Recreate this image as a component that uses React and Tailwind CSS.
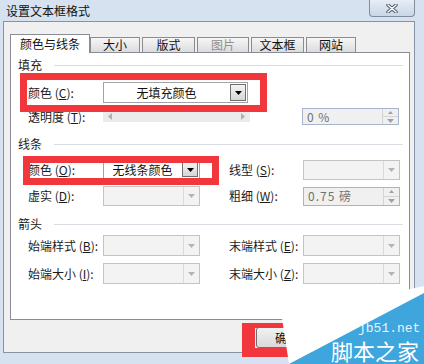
const font = { fontFamily: '"Noto Sans CJK SC", "Liberation Sans", sans-serif' };

const Key = ({ k }) => (
  <span>
    (<span className="underline">{k}</span>):
  </span>
);

const Label = ({ text, k, w = 'w-[75px]', className = '' }) => (
  <div className={`${w} shrink-0 text-[12px] leading-[14px] text-[#1b1b1b] ${className}`}>
    {text} <Key k={k} />
  </div>
);

const Header = ({ text }) => (
  <div className="flex items-center h-[14px] pl-[7px] pr-[6px]">
    <span className="text-[12px] leading-[14px] text-[#1b1b1b]">{text}</span>
    <div className="flex-1 ml-[12px] border-t border-[#d8dde3]" />
  </div>
);

const Arrow = ({ color = '#000' }) => (
  <svg width="7" height="4" viewBox="0 0 7 4">
    <path d="M0 0 L7 0 L3.5 4 Z" fill={color} />
  </svg>
);

const Combo = ({ text, w = 'w-[97px]', h = 'h-[20px]' }) => (
  <div className={`${w} ${h} flex border border-[#a3a3a3] bg-white`}>
    <div className="flex-1 flex items-center justify-center text-[12px] text-[#111]">{text}</div>
    <div className="w-[16px] m-px flex items-center justify-center border border-[#707070] bg-gradient-to-b from-[#f4f4f4] to-[#d6d6d6]">
      <Arrow />
    </div>
  </div>
);

const Disabled = ({ w = 'w-[97px]', h = 'h-[20px]' }) => (
  <div className={`${w} ${h} flex border border-[#c4c4c4] bg-[#f3f3f3]`}>
    <div className="flex-1" />
    <div className="w-[16px] flex items-center justify-center border-l border-[#dadada] bg-[#f3f3f3]">
      <Arrow color="#b4b4b4" />
    </div>
  </div>
);

const Spin = ({ text, w = 'w-[97px]', h = 'h-[19px]' }) => (
  <div className={`${w} ${h} flex border border-[#a6b5cc] bg-[#f0f0f0]`}>
    <div className="flex-1 flex items-center pl-[4px] text-[12px] text-[#707070] tracking-[1px]">{text}</div>
    <div className="w-[16px] flex flex-col border-l border-[#d4d4d4]">
      <div className="flex-1 flex items-center justify-center border-b border-[#d4d4d4]">
        <svg width="5" height="3" viewBox="0 0 5 3"><path d="M0 3 L5 3 L2.5 0 Z" fill="#a0a0a0" /></svg>
      </div>
      <div className="flex-1 flex items-center justify-center">
        <Arrow color="#a0a0a0" />
      </div>
    </div>
  </div>
);

const Tab = ({ children, w, active, disabled }) =>
  active ? (
    <div className={`${w} h-[19px] -mb-px relative z-10 flex items-center justify-center bg-white border border-b-0 border-[#898c95] text-[12px] text-[#111]`}>
      {children}
    </div>
  ) : (
    <div
      className={`${w} h-[15px] flex items-center justify-center border border-b-0 border-[#898c95] bg-gradient-to-b from-[#f6f6f6] to-[#dcdcdc] text-[12px] ${
        disabled ? 'text-[#8f8f8f]' : 'text-[#111]'
      }`}
    >
      {children}
    </div>
  );

export default function App() {
  return (
    <div className="relative w-[424px] h-[364px] overflow-hidden bg-[#d6e2ef]" style={font}>
      {/* Title bar */}
      <div className="flex justify-between items-start h-[21px] pl-[6px] pr-[9px]">
        <span className="self-center text-[12px] text-[#111]">设置文本框格式</span>
        <div className="w-[46px] h-[17px] flex items-center justify-center rounded-b-[4px] border border-t-0 border-[#7f8c9e] bg-gradient-to-b from-[#e6edf6] to-[#c9d6e6]">
          <svg width="12" height="9" viewBox="0 0 12 9">
            <path d="M2 1 L10 8 M10 1 L2 8" stroke="#4b5563" strokeWidth="3.4" strokeLinecap="round" />
            <path d="M2 1 L10 8 M10 1 L2 8" stroke="#fff" strokeWidth="1.6" strokeLinecap="round" />
          </svg>
        </div>
      </div>

      {/* Body */}
      <div className="ml-[3px] w-[412px] h-[332px] border border-[#8593a4] bg-[#f0f0f0] pl-[6px] pt-[12px]">
        <div className="flex items-end h-[18px]">
          <Tab w="w-[80px]" active>颜色与线条</Tab>
          <div className="flex gap-[2px]">
            <Tab w="w-[50px]">大小</Tab>
            <Tab w="w-[53px]">版式</Tab>
            <Tab w="w-[52px]" disabled>图片</Tab>
            <Tab w="w-[53px]">文本框</Tab>
            <Tab w="w-[50px]">网站</Tab>
          </div>
        </div>

        <div className="w-[400px] h-[268px] border border-[#898c95] bg-white flex flex-col">
          <div className="mt-[5px]">
            <Header text="填充" />
          </div>
          <div className="mt-[10px] h-[21px] flex items-center pl-[17px]">
            <Label text="颜色" k="C" />
            <Combo text="无填充颜色" w="w-[145px]" h="h-[21px]" />
          </div>
          <div className="mt-[5px] h-[17px] flex items-center pl-[17px]">
            <Label text="透明度" k="T" />
            <div className="w-[147px] h-[11px] flex items-center justify-between px-[5px] bg-[#ebebeb]">
              <svg width="4" height="7" viewBox="0 0 4 7"><path d="M4 0 L4 7 L0 3.5 Z" fill="#b0b0b0" /></svg>
              <svg width="4" height="7" viewBox="0 0 4 7"><path d="M0 0 L0 7 L4 3.5 Z" fill="#b0b0b0" /></svg>
            </div>
            <div className="ml-[52px]">
              <Spin text="0 %" w="w-[97px]" h="h-[17px]" />
            </div>
          </div>

          <div className="mt-[12px]">
            <Header text="线条" />
          </div>
          <div className="mt-[8px] h-[21px] flex items-center pl-[17px]">
            <Label text="颜色" k="O" />
            <Combo text="无线条颜色" h="h-[19px]" />
            <Label text="线型" k="S" w="w-[74px]" className="ml-[29px]" />
            <Disabled />
          </div>
          <div className="mt-[6px] h-[20px] flex items-center pl-[17px]">
            <Label text="虚实" k="D" />
            <Disabled />
            <Label text="粗细" k="W" w="w-[74px]" className="ml-[29px]" />
            <Spin text="0.75 磅" />
          </div>

          <div className="mt-[11px]">
            <Header text="箭头" />
          </div>
          <div className="mt-[4px] h-[21px] flex items-center pl-[17px]">
            <Label text="始端样式" k="B" />
            <Disabled h="h-[21px]" />
            <Label text="末端样式" k="E" w="w-[74px]" className="ml-[29px]" />
            <Disabled h="h-[21px]" />
          </div>
          <div className="mt-[7px] h-[21px] flex items-center pl-[17px]">
            <Label text="始端大小" k="I" />
            <Disabled h="h-[21px]" />
            <Label text="末端大小" k="Z" w="w-[74px]" className="ml-[29px]" />
            <Disabled h="h-[21px]" />
          </div>
        </div>

        <div className="mt-[7px] ml-[246px] w-[62px] h-[21px] flex items-center justify-center rounded-[3px] border border-[#707070] bg-gradient-to-b from-[#f2f2f2] to-[#d9d9d9] text-[12px] text-[#111]">
          确定
        </div>
      </div>

      {/* Red annotation boxes */}
      <div className="absolute left-[20px] top-[73px] w-[247px] h-[39px] border-[7px] border-[#f2373c]" />
      <div className="absolute left-[23px] top-[156px] w-[196px] h-[29px] border-[7px] border-[#f2373c]" />
      <div className="absolute left-[242px] top-[323px] w-[70px] h-[34px] border-l-[13px] border-t-[5px] border-b-[9px] border-r-[6px] border-[#f2373c]" />

      {/* Watermark */}
      <svg className="absolute left-0 top-0 pointer-events-none" width="424" height="364" viewBox="0 0 424 364">
        <polygon points="282,318 424,286 424,296 289,364" fill="#ffffff" />
        <polygon points="289,364 424,293 424,364" fill="#3ea5dd" />
      </svg>
      <span className="absolute left-[358px] top-[322px] text-[13px] leading-[14px] text-[#e8f4fb]" style={{ fontFamily: '"Liberation Mono", monospace' }}>
        jb51.net
      </span>
      <span className="absolute left-[331px] top-[338px] text-[22px] leading-[24px] text-white">
        脚本之家
      </span>
    </div>
  );
}
